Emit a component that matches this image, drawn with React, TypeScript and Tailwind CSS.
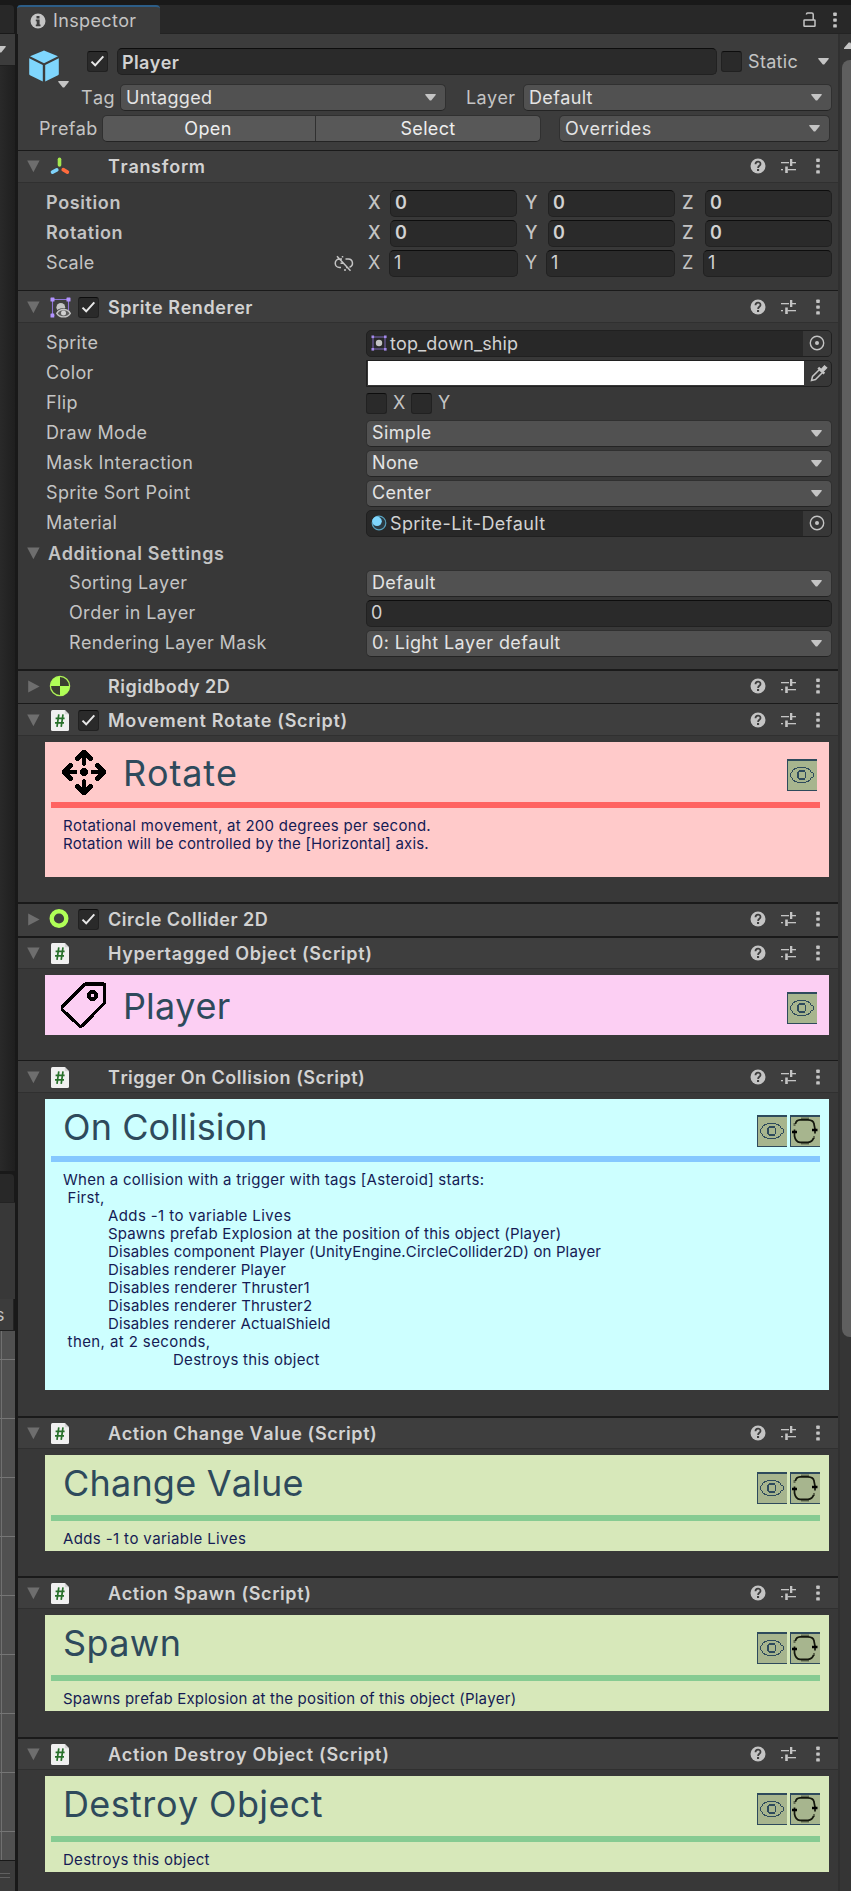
import React from "react";

function Caret({ className = "" }: { className?: string }) {
  return (
    <svg className={`shrink-0 ${className}`} width="11" height="7" viewBox="0 0 11 7" fill="#c4c4c4">
      <path d="M0.3 0h10.4v1L6.2 6.6H4.8L0.3 1z" />
    </svg>
  );
}

function Foldout({ open = true }: { open?: boolean }) {
  return (
    <svg className="shrink-0" width="13" height="13" viewBox="0 0 13 13" fill="#6e6e6e">
      {open ? <path d="M0.2 0.6h12.4L6.4 12.2z" /> : <path d="M1.2 0.4v12.2L12.6 6.5z" />}
    </svg>
  );
}

function Check({ checked = false }: { checked?: boolean }) {
  return (
    <div className="flex h-[21px] w-[21px] shrink-0 items-center justify-center rounded-[3px] border border-[#212121] border-t-[#0d0d0d] bg-[#2a2a2a]">
      {checked && (
        <svg width="15" height="13" viewBox="0 0 15 13" fill="none" stroke="#e8e8e8" strokeWidth="2">
          <path d="M1.5 6.6l3.7 3.7L13.3 1.4" />
        </svg>
      )}
    </div>
  );
}

function Kebab({ className = "" }: { className?: string }) {
  return (
    <svg className={`shrink-0 ${className}`} width="4" height="16" viewBox="0 0 4 16" fill="#c4c4c4">
      <rect x="0.2" y="0.5" width="3.6" height="3.4" rx="0.7" />
      <rect x="0.2" y="6.4" width="3.6" height="3.4" rx="0.7" />
      <rect x="0.2" y="12.2" width="3.6" height="3.4" rx="0.7" />
    </svg>
  );
}

function HeaderTools() {
  return (
    <div className="ml-auto flex items-center pr-[18px]">
      <svg width="16" height="16" viewBox="0 0 16 16">
        <circle cx="8" cy="8" r="7.5" fill="#c4c4c4" />
        <path d="M5.5 6.2c0-3.4 5-3.4 5-.3 0 1.9-2.4 1.8-2.4 4" fill="none" stroke="#3e3e3e" strokeWidth="1.8" />
        <rect x="7" y="11" width="2.1" height="2" fill="#3e3e3e" />
      </svg>
      <svg className="ml-[15px]" width="15" height="16" viewBox="0 0 15 16" fill="#c4c4c4">
        <rect x="0" y="4" width="8" height="1.3" />
        <rect x="9" y="1" width="2.3" height="7" />
        <rect x="11" y="4" width="4" height="1.3" />
        <rect x="0" y="11" width="2" height="1.3" />
        <rect x="4.2" y="8.5" width="2.6" height="6.5" />
        <rect x="6.5" y="11" width="8.5" height="1.3" />
      </svg>
      <Kebab className="ml-[20px]" />
    </div>
  );
}

function ScriptIcon() {
  return (
    <svg width="18" height="21" viewBox="0 0 18 21">
      <path d="M1.5 0h12.3L18 4.2v15.3q0 1.5-1.5 1.5h-15Q0 21 0 19.5v-18Q0 0 1.5 0z" fill="#f0f0f0" />
      <path d="M13.8 0L18 4.2h-4.2z" fill="#d4d4d4" />
      <path d="M7.8 4.3L6 16.8M12 4.3l-1.8 12.5M4.6 8.3h9M4 12.8h9" stroke="#27702a" strokeWidth="1.7" fill="none" />
    </svg>
  );
}

function TransformIcon() {
  return (
    <svg width="20" height="19" viewBox="0 0 20 19" strokeLinecap="round" strokeWidth="3.6" fill="none">
      <path d="M9.5 2.3v5.6" stroke="#a5e84f" />
      <path d="M2.5 15.2l4.3-2.3" stroke="#7fd3fb" />
      <path d="M13.2 12.6l4.2 2.5" stroke="#ff6b3d" />
    </svg>
  );
}

function SpriteRendererIcon() {
  return (
    <svg width="21" height="21" viewBox="0 0 21 21">
      <path d="M2.5 2.5h16v16h-16z" fill="none" stroke="#8d74d6" strokeWidth="1.1" />
      <g fill="#b394ff">
        <rect x="0.5" y="0.5" width="4" height="4" rx="0.6" />
        <rect x="16.5" y="0.5" width="4" height="4" rx="0.6" />
        <rect x="0.5" y="16.5" width="4" height="4" rx="0.6" />
      </g>
      <circle cx="10.8" cy="10.3" r="4.4" fill="#c4c4c4" />
      <path d="M4.5 16.5c3.5-7 13-7 16.5 0v4.5h-16.5z" fill="#3e3e3e" />
      <path d="M6.8 16.3c3-5 10.5-5 13.5 0-3 4.8-10.5 4.8-13.5 0z" fill="#5c5c5c" stroke="#c4c4c4" strokeWidth="1.4" />
      <circle cx="13.5" cy="16" r="2.5" fill="#d0d0d0" />
    </svg>
  );
}

function SpriteIcon() {
  return (
    <svg className="shrink-0" width="16" height="16" viewBox="0 0 16 16">
      <path d="M2 2h12v12H2z" fill="none" stroke="#7a67b8" strokeWidth="1" />
      <g fill="#a48aec">
        <rect x="0.5" y="0.5" width="2.6" height="2.6" />
        <rect x="13" y="0.5" width="2.6" height="2.6" />
        <rect x="0.5" y="13" width="2.6" height="2.6" />
        <rect x="13" y="13" width="2.6" height="2.6" />
      </g>
      <circle cx="8" cy="8" r="3.2" fill="#c4c4c4" />
    </svg>
  );
}

function MaterialIcon() {
  return (
    <svg className="shrink-0" width="16" height="16" viewBox="0 0 16 16">
      <circle cx="8" cy="8" r="6.8" fill="#2b3a42" stroke="#58a0bd" strokeWidth="1.2" />
      <circle cx="6" cy="6.3" r="4.8" fill="#7fd6fd" />
    </svg>
  );
}

function RigidbodyIcon() {
  return (
    <svg width="22" height="22" viewBox="0 0 22 22">
      <circle cx="11" cy="11" r="9.6" fill="#3a3f30" stroke="#adf257" strokeWidth="1.3" />
      <path d="M11 11V1.4A9.6 9.6 0 0 0 1.4 11zM11 11v9.6a9.6 9.6 0 0 0 9.6-9.6z" fill="#b0ff57" />
    </svg>
  );
}

function ColliderIcon() {
  return (
    <svg className="-ml-[2px]" width="20" height="20" viewBox="0 0 20 20">
      <circle cx="10" cy="9.5" r="7.3" fill="none" stroke="#b0ff57" strokeWidth="4.4" />
    </svg>
  );
}

interface HeaderProps {
  title: string;
  icon: React.ReactNode;
  check?: boolean;
  open?: boolean;
  top: string;
  tracking?: string;
}

function ComponentHeader({ title, icon, check, open = true, top, tracking = "tracking-[0.68px]" }: HeaderProps) {
  return (
    <div className={`flex shrink-0 items-center bg-[#3e3e3e] pl-[9px] ${open ? "border-b border-[#303030]" : ""} ${top}`}>
      <Foldout open={open} />
      <div className="ml-[9px] flex w-[22px] shrink-0 justify-center">{icon}</div>
      <div className="ml-[7px] w-[21px]">{check && <Check checked />}</div>
      <div className={`ml-[9px] pt-[2px] text-[18px] font-semibold leading-[20px] text-[#d2d2d2] ${tracking}`}>{title}</div>
      <HeaderTools />
    </div>
  );
}

const CLOSED = "h-[34px] shadow-[inset_0_2px_0_#1a1a1a]";
const THIN = "h-[33px] shadow-[inset_0_1px_0_#1a1a1a] pt-[2px]";
const THICK = "h-[33px] shadow-[inset_0_2px_0_#1a1a1a] pt-[2px]";

function Dropdown({ label, className = "" }: { label: string; className?: string }) {
  return (
    <div
      className={`flex h-[27px] items-center rounded-[5px] border border-[#303030] border-b-[#242424] bg-[#515151] pl-[5px] pr-[9px] text-[#e4e4e4] ${className}`}
    >
      <span>{label}</span>
      <Caret className="ml-auto" />
    </div>
  );
}

function Field({ value, className = "" }: { value: string; className?: string }) {
  return (
    <div
      className={`flex h-[27px] items-center rounded-[5px] border border-[#212121] border-t-[#0d0d0d] bg-[#2a2a2a] pl-[4px] text-[#d2d2d2] ${className}`}
    >
      {value}
    </div>
  );
}

function ObjectField({ icon, value, tracking }: { icon: React.ReactNode; value: string; tracking: string }) {
  return (
    <div className="flex h-[27px] w-[466px] items-center rounded-[5px] border border-[#202020] bg-[#282828] pl-[4px] text-[#d2d2d2]">
      {icon}
      <span className={`ml-[3px] pt-[2px] ${tracking}`}>{value}</span>
      <div className="ml-auto flex h-[25px] w-[28px] items-center justify-center rounded-r-[4px] bg-[#373737]">
        <svg width="16" height="16" viewBox="0 0 16 16">
          <circle cx="8" cy="8" r="6.7" fill="none" stroke="#c4c4c4" strokeWidth="1.4" />
          <circle cx="8" cy="8" r="2" fill="#c4c4c4" />
        </svg>
      </div>
    </div>
  );
}

function Row({ label, indent = false, children }: { label: string; indent?: boolean; children: React.ReactNode }) {
  return (
    <div className="flex h-[30px] items-center">
      <div className={indent ? "w-[320px] pl-[23px]" : "w-[320px]"}>{label}</div>
      {children}
    </div>
  );
}

function VectorRow({ label, values, bold = false }: { label: string; values: string[]; bold?: boolean }) {
  return (
    <div className={`flex h-[30px] items-center ${bold ? "font-semibold tracking-[0.6px]" : ""}`}>
      <div className="w-[288px]">{label}</div>
      <div className="w-[34px]">
        {!bold && (
          <svg width="20" height="17" viewBox="0 0 20 17" fill="none" stroke="#c4c4c4" strokeWidth="1.5">
            <path d="M8 4H5.5a4.2 4.2 0 0 0 0 8.5H7M11.5 4h2.5a4.2 4.2 0 0 1 1.5 8.2M12 12.5h1M6.5 8.3h3M3 1.2l13.5 14.5M8.5 1v1.5M11 14v2" />
          </svg>
        )}
      </div>
      {["X", "Y", "Z"].map((axis, i) => (
        <React.Fragment key={axis}>
          <div
            className={`${bold ? "font-medium" : ""} ${i === 0 ? (bold ? "w-[22px]" : "w-[21px]") : bold ? "w-[23px]" : "w-[21px]"} ${
              i === 1 && bold ? "ml-[8px]" : i > 0 ? "ml-[7px]" : ""
            }`}
          >
            {axis}
          </div>
          <Field value={values[i]} className={bold ? "w-[127px]" : "w-[129px]"} />
        </React.Fragment>
      ))}
    </div>
  );
}

function EyeButton() {
  return (
    <svg width="30" height="32" viewBox="0 0 30 32" shapeRendering="crispEdges">
      <rect width="30" height="32" fill="#a7b58e" />
      <g fill="#2e4a5c">
        <rect width="30" height="2" />
        <rect width="1" height="32" />
        <rect y="31" width="30" height="1" />
        <path d="M10 8h9v1h-9zM7 9h3v1H7zM19 9h3v1h-3zM6 10h2v1H6zM21 10h2v1h-2zM5 11h1v2H5zM23 11h1v2h-1zM4 13h1v1H4zM24 13h2v1h-2zM3 14h1v4H3zM26 14h1v4h-1zM4 18h1v1H4zM24 18h2v1h-2zM5 19h1v2H5zM23 19h1v2h-1zM6 21h2v1H6zM21 21h2v1h-2zM7 22h3v1H7zM19 22h3v1h-3zM10 23h9v1h-9z" />
        <path d="M12 11h6v2h-6zM10 13h2v6h-2zM18 13h1v6h-1zM12 19h6v2h-6zM11 12h1v1h-1zM11 19h1v1h-1z" />
      </g>
    </svg>
  );
}

function LoopButton() {
  return (
    <svg width="30" height="32" viewBox="0 0 30 32">
      <rect width="30" height="32" fill="#a7b58e" />
      <g fill="#2e4a5c">
        <rect width="30" height="2" />
        <rect width="1" height="32" />
        <rect y="31" width="30" height="1" />
      </g>
      <path d="M11 3.5h8M4.5 11V8M11 28.5h8M24 21v3" stroke="#5f684f" strokeWidth="2" />
      <path
        d="M5.5 9Q6 5 10 4.8h8Q23.5 5 24 9l1 5v4.5M4.5 14.5V21Q5.5 27 10 27.3h8Q22.5 27 23.5 23"
        fill="none"
        stroke="#14170d"
        strokeWidth="1.7"
      />
      <path d="M22 15h5.5M2 17h5" stroke="#000" strokeWidth="2.6" />
    </svg>
  );
}

interface CardProps {
  title: string;
  icon?: React.ReactNode;
  loop?: boolean;
  bg: string;
  bar?: string;
  head: string;
  titleTracking?: string;
  children?: React.ReactNode;
}

function Card({ title, icon, loop, bg, bar, head, titleTracking = "tracking-[0.3px]", children }: CardProps) {
  return (
    <div className={`ml-[27px] w-[784px] ${bg}`}>
      <div className={`flex pr-[9px] ${head}`}>
        {icon && <div className="-mt-[1px] ml-[16px] flex w-[46px] items-center">{icon}</div>}
        <div
          className={`text-[36px] text-[#2e4a5c] ${titleTracking} ${icon ? "ml-[16px] self-center pt-[2px] leading-[60px]" : "ml-[18px] leading-[56px]"}`}
        >
          {title}
        </div>
        <div className={`ml-auto flex items-start gap-[3px] ${loop ? "" : "pr-[3px]"}`}>
          <EyeButton />
          {loop && <LoopButton />}
        </div>
      </div>
      {bar && <div className={`ml-[6px] h-[6px] w-[769px] ${bar}`} />}
      <div className="whitespace-pre pl-[18px] pt-[9px] text-[15px] leading-[18px] tracking-[0.22px] text-[#151b54]">{children}</div>
    </div>
  );
}

function MoveIcon() {
  return (
    <svg width="46" height="46" viewBox="0 0 46 46" fill="none" stroke="#000" strokeWidth="4.6" strokeLinecap="round" strokeLinejoin="round" shapeRendering="crispEdges">
      <path d="M23 14.5V4M16.5 9.5L23 3l6.5 6.5M23 32.5V42M16.5 37.5L23 44l6.5-6.5M14 23H4M9.5 16.5L3 23l6.5 6.5M32 23h10M36.5 16.5L43 23l-6.5 6.5" />
      <circle cx="23" cy="23" r="2" fill="#000" />
    </svg>
  );
}

function TagIcon() {
  return (
    <svg width="46" height="46" viewBox="0 0 46 46" fill="none" stroke="#000" strokeWidth="3.2" strokeLinejoin="round" shapeRendering="crispEdges">
      <path d="M25 2h17q1.5 0 1.5 1.5V20q0 1-.8 1.8L21.5 43.5q-1.7 1.5-3.4 0L1.5 28q-1.5-1.6 0-3.3L23 3q.8-1 2-1z" />
      <circle cx="31.5" cy="13.500" r="3.500" strokeWidth="4" />
    </svg>
  );
}

const COLLISION_LINES = [
  { text: "When a collision with a trigger with tags [Asteroid] starts:", style: "tracking-[0.27px]" },
  { text: " First,", style: "tracking-[0.3px]" },
  { text: "Adds -1 to variable Lives", style: "pl-[45px] tracking-[0.39px]" },
  { text: "Spawns prefab Explosion at the position of this object (Player)", style: "pl-[45px] tracking-[0.2px]" },
  { text: "Disables component Player (UnityEngine.CircleCollider2D) on Player", style: "pl-[45px] tracking-[0.13px]" },
  { text: "Disables renderer Player", style: "pl-[45px] tracking-[0.15px]" },
  { text: "Disables renderer Thruster1", style: "pl-[45px] tracking-[0.2px]" },
  { text: "Disables renderer Thruster2", style: "pl-[45px] tracking-[0.18px]" },
  { text: "Disables renderer ActualShield", style: "pl-[45px] tracking-[0.14px]" },
  { text: " then, at 2 seconds,", style: "tracking-[0.4px]" },
  { text: "Destroys this object", style: "pl-[110px] tracking-[0.28px]" },
];

function LeftDock() {
  return (
    <div className="flex w-[15px] shrink-0 flex-col overflow-hidden bg-[#191919]">
      <div className="mt-[5px] h-[28px] w-[14px] rounded-tr-[4px] bg-[#282828]" />
      <div className="mt-px flex h-[31px] items-center bg-[#3c3c3c]">
        <Caret className="-ml-[5px]" />
      </div>
      <div className="h-[1106px] border-t border-[#1f1f1f] bg-gradient-to-r from-[#292929] to-[#1f1f1f]" />
      <div className="mt-[3px] h-[28px] w-[14px] rounded-tr-[4px] bg-[#282828]" />
      <div className="h-[97px] border-t border-[#232323] bg-[#383838]" />
      <div className="flex h-[31px] w-[14px] items-center border-r border-[#232323] bg-[#3c3c3c] text-[18px] leading-none text-[#c4c4c4]">
        <span className="-ml-[5px]">s</span>
      </div>
      <div className="flex h-[530px] border-t border-[#1f1f1f] bg-[#505050]">
        <div className="h-full w-[2px] border-r border-[#707070]" />
        <div className="flex-1 pt-[28px]">
          {[0, 1, 2, 3, 4, 5, 6, 7, 8].map((n) => (
            <div key={n} className="-ml-[2px] h-[59px] border-t border-[#757575]" />
          ))}
        </div>
      </div>
      <div className="flex flex-1 flex-col gap-[3px] border-t border-[#191919] bg-[#3c3c3c] pt-[12px]">
        <div className="h-px w-[10px] bg-[#606060]" />
        <div className="h-px w-[10px] bg-[#606060]" />
      </div>
    </div>
  );
}

export default function App() {
  return (
    <div className="flex h-[1891px] w-[851px] overflow-hidden bg-[#383838] font-['Inter',sans-serif] text-[18px] leading-[20px] tracking-[0.36px] text-[#c4c4c4] [font-feature-settings:'calt'_0] [font-kerning:none]">
      <LeftDock />
      <div className="w-[3px] shrink-0 bg-[#191919]" />
      <div className="flex min-w-0 flex-1 flex-col">
        <div className="h-[5px] bg-[#191919]" />
        <div className="flex h-[29px] shrink-0 border-b border-[#232323] bg-[#282828]">
          <div className="-mb-px -ml-px flex w-[143px] items-center rounded-t-[4px] border-t-2 border-[#2c5d87] bg-[#3c3c3c] pl-[13px]">
            <svg width="16" height="16" viewBox="0 0 16 16">
              <circle cx="8" cy="8" r="7.5" fill="#c4c4c4" />
              <path d="M6.5 3h3v2.4h-3zM5.8 6.6h3.800v5h.9v1.600H5.800v-1.600h.9V8.200h-.9z" fill="#3c3c3c" />
            </svg>
            <span className="ml-[7px]">Inspector</span>
          </div>
          <svg className="ml-auto mt-[7px]" width="13" height="16" viewBox="0 0 13 16" fill="none" stroke="#c4c4c4" strokeWidth="1.5">
            <rect x="1" y="8" width="11" height="6.3" rx="0.5" />
            <path d="M3.5 2.6V2q0-1 1-1h4.2q1.5 0 1.5 1.5V8" />
          </svg>
          <Kebab className="ml-[17px] mr-[14px] mt-[7px]" />
        </div>

        <div className="flex min-h-0 flex-1">
          <div className="flex w-[820px] shrink-0 flex-col">
            <div className="flex h-[116px] shrink-0 flex-col bg-[#3c3c3c]">
              <div className="flex h-[48px] shrink-0">
                <div className="relative w-[69px] pl-[11px] pt-[16px]">
                  <svg width="30" height="32" viewBox="0 0 30 32" fill="#7fd6fd">
                    <path d="M15 0.4L29 6.3 15 13.2 1 6.3z" />
                    <path d="M0.2 8.2L13.8 15v16.5L1 25.3q-.8-.4-.8-1.3zM29.800 8.200L16.200 15v16.500L29 25.300q.8-.4.8-1.300z" />
                  </svg>
                  <Caret className="absolute left-[40px] top-[47px]" />
                </div>
                <div className="pt-[17px]">
                  <Check checked />
                </div>
                <Field value="Player" className="ml-[9px] mt-[14px] w-[600px] pt-[2px] font-semibold" />
                <div className="ml-[4px] pt-[17px]">
                  <Check />
                </div>
                <div className="ml-[6px] pt-[18px]">Static</div>
                <Caret className="ml-auto mr-[9px] mt-[24px]" />
              </div>
              <div className="flex h-[31px] items-center pl-[63px]">
                <div className="w-[39px]">Tag</div>
                <Dropdown label="Untagged" className="w-[326px]" />
                <div className="ml-[20px] w-[57px]">Layer</div>
                <Dropdown label="Default" className="w-[309px]" />
              </div>
              <div className="flex h-[31px] items-center pl-[21px]">
                <div className="w-[63px]">Prefab</div>
                <div className="flex h-[27px] w-[439px] rounded-[5px] border border-[#303030] border-b-[#242424] bg-[#585858] text-center leading-[25px] text-[#eeeeee]">
                  <div className="w-[213px] border-r border-[#303030] pr-[2px]">Open</div>
                  <div className="flex-1">Select</div>
                </div>
                <Dropdown label="Overrides" className="ml-[18px] w-[271px]" />
              </div>
            </div>

            <section className="flex h-[140px] shrink-0 flex-col">
              <ComponentHeader title="Transform" icon={<TransformIcon />} top="h-[33px] shadow-[inset_0_1px_0_#1a1a1a]" />
              <div className="pl-[28px] pt-[5px]">
                <VectorRow label="Position" values={["0", "0", "0"]} bold />
                <VectorRow label="Rotation" values={["0", "0", "0"]} bold />
                <VectorRow label="Scale" values={["1", "1", "1"]} />
              </div>
            </section>

            <section className="flex h-[379px] shrink-0 flex-col">
              <ComponentHeader title="Sprite Renderer" icon={<SpriteRendererIcon />} check top={THIN} tracking="tracking-[0.57px]" />
              <div className="pl-[28px] pt-[5px]">
                <Row label="Sprite">
                  <ObjectField icon={<SpriteIcon />} value="top_down_ship" tracking="tracking-[0.1px]" />
                </Row>
                <Row label="Color">
                  <div className="flex h-[27px] w-[466px] items-center rounded-r-[5px] border border-[#202020] bg-[#373737]">
                    <div className="ml-px h-[24px] w-[436px] bg-white" />
                    <svg className="ml-[6px]" width="18" height="18" viewBox="0 0 18 18">
                      <path d="M10 5L2.5 12.5l-1 4 4-1L13 8z" fill="none" stroke="#c4c4c4" strokeWidth="1.5" />
                      <path d="M8.3 3.7l6 6M11 6.5l3.5-3.8 1.3 1.2L12.3 7.5z" stroke="#c4c4c4" strokeWidth="2.5" fill="#c4c4c4" />
                    </svg>
                  </div>
                </Row>
                <Row label="Flip">
                  <Check />
                  <span className="ml-[6px] w-[18px]">X</span>
                  <Check />
                  <span className="ml-[6px]">Y</span>
                </Row>
                <Row label="Draw Mode">
                  <Dropdown label="Simple" className="w-[466px]" />
                </Row>
                <Row label="Mask Interaction">
                  <Dropdown label="None" className="w-[466px]" />
                </Row>
                <Row label="Sprite Sort Point">
                  <Dropdown label="Center" className="w-[466px]" />
                </Row>
                <Row label="Material">
                  <ObjectField icon={<MaterialIcon />} value="Sprite-Lit-Default" tracking="tracking-[0.4px]" />
                </Row>
                <div className="-ml-[19px] flex h-[30px] items-center pt-px font-semibold tracking-[0.62px]">
                  <Foldout />
                  <span className="ml-[8px]">Additional Settings</span>
                </div>
                <Row label="Sorting Layer" indent>
                  <Dropdown label="Default" className="w-[466px]" />
                </Row>
                <Row label="Order in Layer" indent>
                  <Field value="0" className="w-[466px]" />
                </Row>
                <Row label="Rendering Layer Mask" indent>
                  <Dropdown label="0: Light Layer default" className="w-[466px]" />
                </Row>
              </div>
            </section>

            <section className="h-[34px] shrink-0">
              <ComponentHeader title="Rigidbody 2D" icon={<RigidbodyIcon />} open={false} top={CLOSED} tracking="tracking-[0.48px]" />
            </section>

            <section className="h-[199px] shrink-0">
              <ComponentHeader title="Movement Rotate (Script)" icon={<ScriptIcon />} check top={THIN} />
              <div className="pt-[6px]">
                <Card
                  title="Rotate"
                  titleTracking="tracking-[0.9px]"
                  icon={<MoveIcon />}
                  bg="h-[135px] bg-[#ffcaca]"
                  bar="bg-[#ff6361]"
                  head="h-[60px] [&>div:last-child]:pt-[17px]"
                >
                  <div className="tracking-[0.28px]">Rotational movement, at 200 degrees per second.</div>
                  <div className="tracking-[0.18px]">Rotation will be controlled by the [Horizontal] axis.</div>
                </Card>
              </div>
            </section>

            <section className="h-[34px] shrink-0">
              <ComponentHeader title="Circle Collider 2D" icon={<ColliderIcon />} check open={false} top={CLOSED} tracking="tracking-[0.48px]" />
            </section>

            <section className="h-[124px] shrink-0">
              <ComponentHeader title="Hypertagged Object (Script)" icon={<ScriptIcon />} top={THICK} tracking="tracking-[0.71px]" />
              <div className="pt-[6px]">
                <Card
                  title="Player"
                  titleTracking="tracking-[0.1px]"
                  icon={<TagIcon />}
                  bg="h-[60px] bg-[#fccff3]"
                  head="h-[60px] [&>div:last-child]:pt-[17px]"
                />
              </div>
            </section>

            <section className="h-[356px] shrink-0">
              <ComponentHeader title="Trigger On Collision (Script)" icon={<ScriptIcon />} top={THIN} tracking="tracking-[0.51px]" />
              <div className="pt-[6px]">
                <Card
                  title="On Collision"
                  titleTracking="tracking-[0.1px]"
                  loop
                  bg="h-[291px] bg-[#cdffff]"
                  bar="bg-[#85c8ff]"
                  head="h-[57px] [&>div:last-child]:pt-[16px]"
                >
                  {COLLISION_LINES.map((line) => (
                    <div key={line.text} className={line.style}>
                      {line.text}
                    </div>
                  ))}
                </Card>
              </div>
            </section>

            <section className="h-[160px] shrink-0">
              <ComponentHeader title="Action Change Value (Script)" icon={<ScriptIcon />} top={THICK} tracking="tracking-[0.6px]" />
              <div className="pt-[6px]">
                <Card
                  title="Change Value"
                  titleTracking="tracking-[0.2px]"
                  loop
                  bg="h-[96px] bg-[#d7e8ba]"
                  bar="bg-[#86cb92]"
                  head="h-[60px] [&>div:last-child]:pt-[17px]"
                >
                  <div className="tracking-[0.38px]">Adds -1 to variable Lives</div>
                </Card>
              </div>
            </section>

            <section className="h-[161px] shrink-0">
              <ComponentHeader title="Action Spawn (Script)" icon={<ScriptIcon />} top={THICK} tracking="tracking-[0.64px]" />
              <div className="pt-[6px]">
                <Card
                  title="Spawn"
                  titleTracking="tracking-[0.5px]"
                  loop
                  bg="h-[96px] bg-[#d7e8ba]"
                  bar="bg-[#86cb92]"
                  head="h-[60px] [&>div:last-child]:pt-[17px]"
                >
                  <div className="tracking-[0.2px]">Spawns prefab Explosion at the position of this object (Player)</div>
                </Card>
              </div>
            </section>

            <section className="h-[154px] shrink-0">
              <ComponentHeader title="Action Destroy Object (Script)" icon={<ScriptIcon />} top={THICK} />
              <div className="pt-[6px]">
                <Card
                  title="Destroy Object"
                  titleTracking="tracking-[0.35px]"
                  loop
                  bg="h-[96px] bg-[#d7e8ba]"
                  bar="bg-[#86cb92]"
                  head="h-[60px] [&>div:last-child]:pt-[17px]"
                >
                  <div className="tracking-[0.28px]">Destroys this object</div>
                </Card>
              </div>
            </section>
          </div>

          <div className="flex w-[13px] shrink-0 flex-col overflow-hidden border-l-2 border-[#303030] bg-[#353535]">
            <svg className="ml-[4px] mt-[8px] shrink-0" width="11" height="8" viewBox="0 0 11 8" fill="#c4c4c4">
              <path d="M0 7h11V6L6.3 0.5H4.7L0 6z" />
            </svg>
            <div className="ml-[2px] mt-[10px] h-[1277px] w-[20px] shrink-0 rounded-[8px] bg-[#5f5f5f]" />
          </div>
        </div>
      </div>
    </div>
  );
}
